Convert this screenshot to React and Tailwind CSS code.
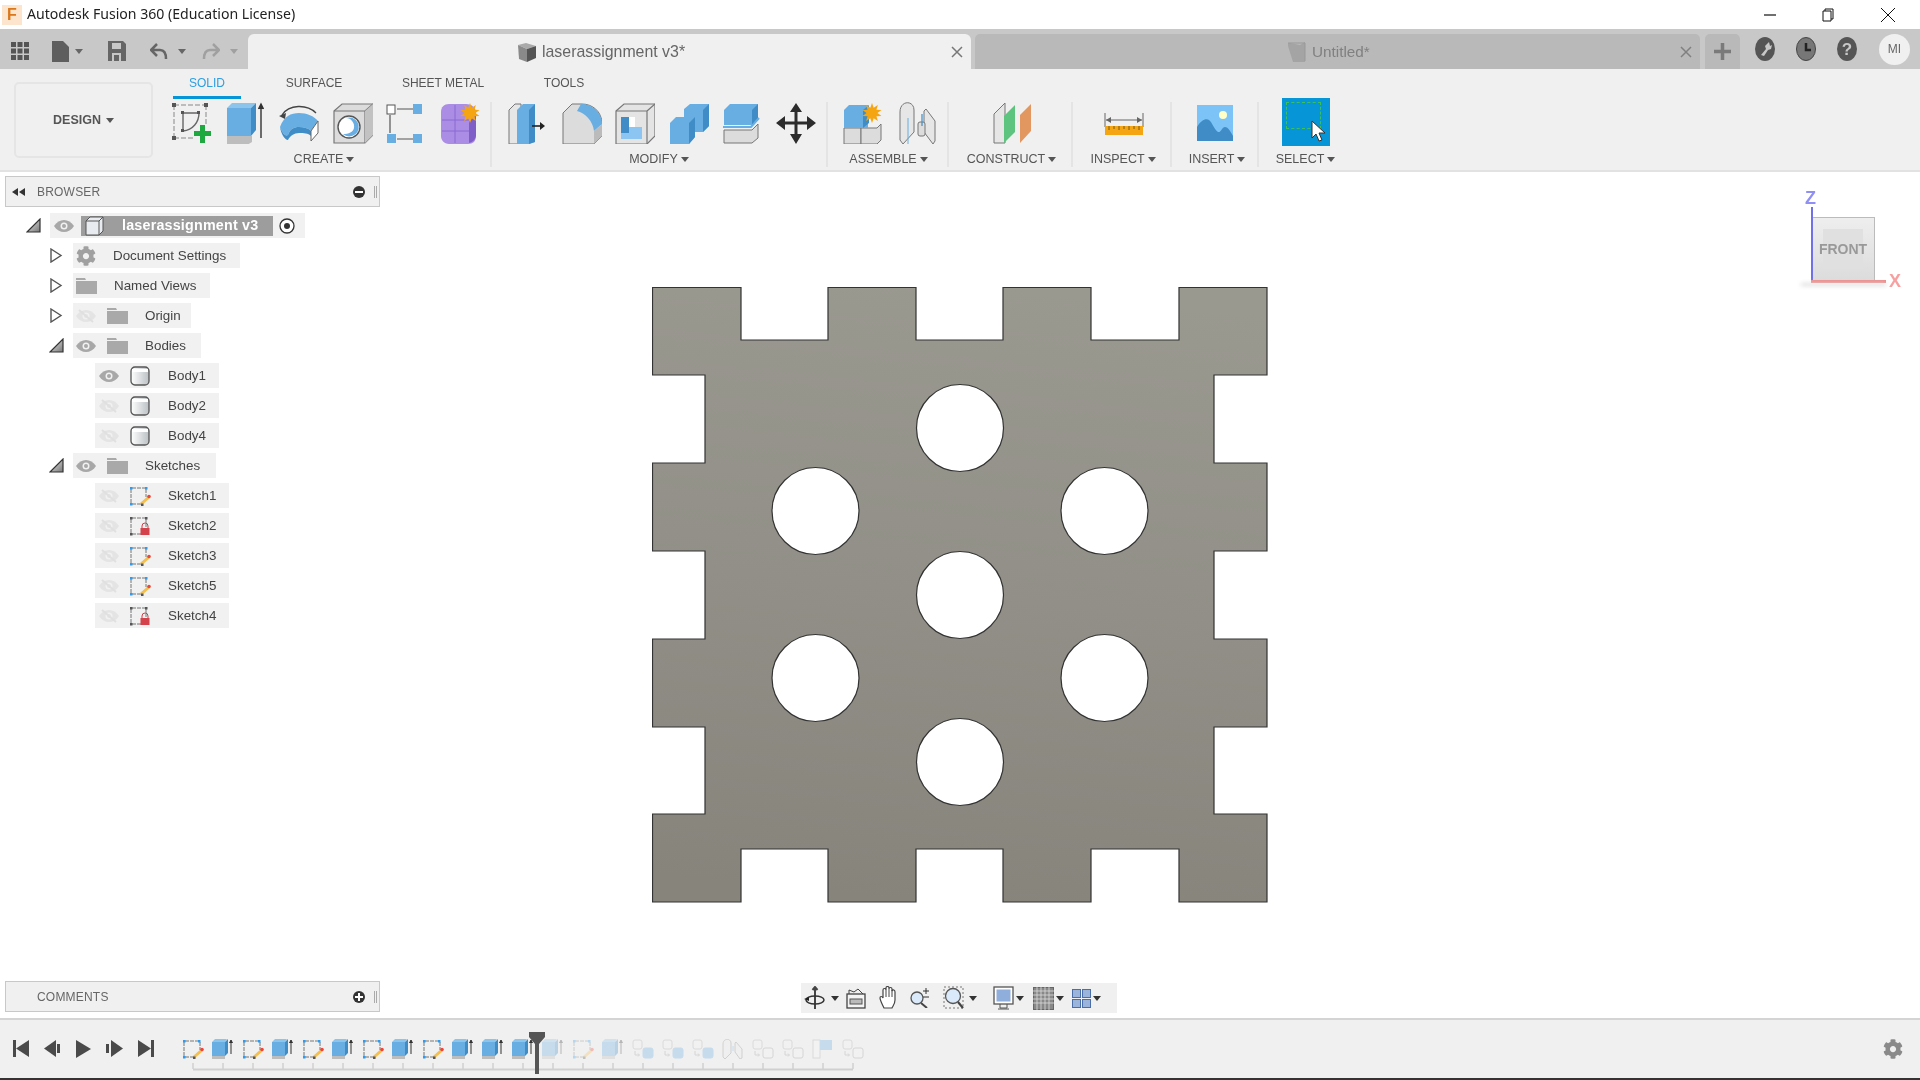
import { FaCog } from 'react-icons/fa'

const Ico = ({ w = 40, h = 42, children, className = '' }) => (
  <svg width={w} height={h} viewBox={`0 0 ${w} ${h}`} className={`shrink-0 ${className}`}>{children}</svg>
)

const BLUE = '#68aee2'
const DBLUE = '#3f8cc6'
const GR = '#dcdcdc'
const LN = '#777'

const Caret = ({ color = '#555' }) => (
  <svg width="8" height="5" viewBox="0 0 8 5" className="shrink-0"><path d="M0 0h8L4 5z" fill={color} /></svg>
)

const Star = ({ x, y, r = 9 }) => {
  const pts = []
  for (let i = 0; i < 20; i++) {
    const a = (i * Math.PI) / 10
    const rr = i % 2 ? r * 0.55 : r
    pts.push(`${x + rr * Math.sin(a)},${y - rr * Math.cos(a)}`)
  }
  return <polygon points={pts.join(' ')} fill="#f5a511" />
}

// toolbar icons
const SketchIcon = () => (
  <Ico>
    <path d="M2 3h32M2 3v33M2 36h20M34 3v20" stroke="#888" strokeWidth="1" strokeDasharray="5 2" fill="none" />
    {[[2, 3], [34, 3], [2, 36]].map(([x, y]) => <rect key={x + '' + y} x={x - 2} y={y - 2} width="4" height="4" fill="#555" />)}
    <path d="M11 11h16M11 11v17M27 11c0 9-6 17-16 18" stroke="#666" strokeWidth="1.4" fill="none" />
    <rect x="9" y="9" width="3" height="3" fill="#555" /><rect x="25" y="9" width="3" height="3" fill="#555" /><rect x="9" y="27" width="3" height="3" fill="#555" />
    <path d="M28 23h5v6h6v5h-6v7h-5v-7h-6v-5h6z" fill="#1fa83f" />
  </Ico>
)
const ExtrudeIcon = () => (
  <Ico>
    <path d="M1 34h25v6l-5 3H1z" fill="#bdbdbd" />
    <path d="M1 6h24v28H1z" fill={BLUE} />
    <path d="M1 6l5-5h24l-5 5z" fill="#8cc4ec" />
    <path d="M25 6l5-5v27l-5 6z" fill={DBLUE} />
    <path d="M35 36V3M32.5 7L35 2l2.5 5" stroke="#333" strokeWidth="1.4" fill="#333" />
  </Ico>
)
const RevolveIcon = () => (
  <Ico>
    <path d="M3 13C10 2 28 2 37 11" stroke="#444" strokeWidth="1.3" fill="none" />
    <path d="M0 14l7-3-1 6z" fill="#444" />
    <path d="M1 25C5 14 12 11 20 11s15 3 19 8l-7 10c-3-3-7-4-12-4s-9 2-11 8c-3 2-6-3-8-8z" fill={BLUE} />
    <path d="M1 25c2 5 5 10 8 8 2-6 6-8 11-8s9 1 12 4v5c-3-3-7-3-12-3s-9 3-11 7C6 38 2 32 1 25z" fill={DBLUE} />
    <path d="M32 29l7-10v12l-7 8z" fill="#fff" stroke="#666" />
  </Ico>
)
const HoleIcon = () => (
  <Ico>
    <path d="M1 9L9 2h31v31l-8 8H1z" fill={GR} stroke={LN} strokeWidth="1.2" />
    <path d="M1 9h31v32M32 9l8-7" stroke={LN} strokeWidth="1.2" fill="none" />
    <path d="M32 9l8-7v31l-8 8z" fill="#c2c2c2" />
    <circle cx="16" cy="25" r="11" fill="#fff" stroke="#555" strokeWidth="1.4" />
    <path d="M13 16a9.500 9.500 0 1 1-3 16c6 0 10-2 11-6 1-5-3-10-8-10z" fill={BLUE} />
  </Ico>
)
const PatternIcon = () => (
  <Ico>
    <path d="M11 7h16M4 13v18M11 37h16" stroke="#555" strokeWidth="1.2" />
    <rect x="1" y="3" width="8" height="9" fill="#fff" stroke="#555" />
    <rect x="27" y="2" width="9" height="10" fill={BLUE} />
    <rect x="1" y="32" width="9" height="9" fill={BLUE} />
    <rect x="27" y="32" width="9" height="9" fill={BLUE} />
  </Ico>
)
const FormIcon = () => (
  <Ico>
    <path d="M9 2h17c6 0 10 4 10 9v23c0 5-3 8-8 8H9c-5 0-8-4-8-8V10c0-5 3-8 8-8z" fill="#ab8de6" />
    <path d="M2 18h27M2 29h27M15 3v38" stroke="#8a6ad2" strokeWidth="1" />
    <path d="M29 19l7-6v20c0 4-3 7-7 8z" fill="#7f5fc7" />
    <Star x={30} y={11} r={10} />
  </Ico>
)
const PressPullIcon = () => (
  <Ico>
    <path d="M1 8l6-6h6v40H1z" fill="#e6e6e6" stroke={LN} />
    <path d="M9 8l6-6h12v38l-6 2H9z" fill={BLUE} />
    <path d="M21 8l6-6v38l-6 2z" fill={DBLUE} />
    <path d="M24 24h11" stroke="#222" strokeWidth="1.6" /><path d="M32 20l5 4-5 4z" fill="#222" />
  </Ico>
)
const FilletIcon = () => (
  <Ico>
    <path d="M1 11L10 2h10c10 0 20 7 20 20v12l-8 8H1z" fill={GR} stroke={LN} />
    <path d="M19 2c11 0 21 8 21 20l-8 7C31 19 23 11 15 9z" fill={BLUE} />
    <path d="M32 29l8-7v12l-8 8z" fill="#bbb" />
  </Ico>
)
const ShellIcon = () => (
  <Ico>
    <path d="M1 9l8-7h31v32l-8 8H1z" fill="#e4e4e4" stroke={LN} strokeWidth="1.2" />
    <path d="M1 9h31v33M32 9l8-7" stroke={LN} strokeWidth="1.2" fill="none" />
    <path d="M6 15h14v10h7v12H6z" fill="#8cc4f2" />
    <path d="M6 15h8v16H6z" fill={DBLUE} /><path d="M14 15h6v10h-6z" fill="#fff" />
    <path d="M6 37l8-6h13v6z" fill="#8cc4f2" />
  </Ico>
)
const CombineIcon = () => (
  <Ico>
    <path d="M15 7l6-5h19v22l-6 6H22v-15H15z" fill={BLUE} />
    <path d="M34 8l6-6v22l-6 6z" fill={DBLUE} />
    <path d="M1 21l6-6h19v20l-6 7H1z" fill={BLUE} />
    <path d="M20 21l6-6v20l-6 7z" fill={DBLUE} />
  </Ico>
)
const SplitIcon = () => (
  <Ico>
    <path d="M2 8l6-6h28v16l-6 5H2z" fill={BLUE} />
    <path d="M30 8l6-6v16l-6 5z" fill={DBLUE} />
    <path d="M1 25h28l8-9" stroke="#68aee2" strokeWidth="2" fill="none" />
    <path d="M2 28h28l6-6v14l-6 5H2z" fill={GR} stroke={LN} />
  </Ico>
)
const MoveIcon = () => (
  <Ico>
    <path d="M20 1l6 9h-4.500v9.500H31V14l9 7-9 7v-5.500h-9.500V32H26l-6 10-6-10h4.500v-9.500H9V28L0 21l9-7v5.500h9.500V10H14z" fill="#2c2c2c" />
  </Ico>
)
const NewCompIcon = () => (
  <Ico>
    <path d="M1 26h17v16H1z" fill={GR} stroke={LN} /><path d="M18 26h16l4-4v16l-4 4H18z" fill={GR} stroke={LN} />
    <path d="M1 8l5-5h19v23H1z" fill={BLUE} /><path d="M20 8l6-5v18l-6 5z" fill={DBLUE} />
    <Star x={29} y={11} r={10} />
  </Ico>
)
const JointIcon = () => (
  <Ico>
    <path d="M1 10c0-12 14-12 14-2v22L4 42 1 38z" fill="#e6e6e6" stroke={LN} />
    <path d="M9 16v26" stroke={BLUE} strokeWidth="1" />
    <path d="M27 7l9 12v20l-2 3-9-12V9z" fill="#e6e6e6" stroke={LN} />
    <rect x="19" y="20" width="7" height="14" rx="2" fill="#ddd" stroke={LN} />
    <path d="M23 12v12" stroke={DBLUE} strokeWidth="1.2" />
  </Ico>
)
const PlaneIcon = () => (
  <Ico>
    <path d="M1 12L12 1v40H1z" fill="#e6e6e6" stroke={LN} />
    <path d="M11 41V14L22 3v27z" fill="#5cc47e" />
    <path d="M27 41V13L38 2v27z" fill="#e29660" />
  </Ico>
)
const MeasureIcon = () => (
  <Ico>
    <path d="M1 11v14M39 11v14" stroke="#666" /><path d="M2 18h36" stroke="#666" />
    <path d="M2 18l5-3v6zM38 18l-5-3v6z" fill="#666" />
    <rect x="1" y="24" width="38" height="9" fill="#f5a511" />
    <path d="M5 24v4M10 24v3M15 24v4M20 24v3M25 24v4M30 24v3M35 24v4" stroke="#7a5a10" />
  </Ico>
)
const ImageIcon = () => (
  <Ico w={36} h={36}>
    <rect width="36" height="36" fill="#7cc3f8" />
    <circle cx="26" cy="10" r="4" fill="#ffffc8" />
    <path d="M0 36V22c4-7 9-9 12-7 3 2 5 9 9 12 3 1 4-5 7-5s6 5 8 9v5z" fill="#3f8cc6" />
  </Ico>
)
const SelectIcon = () => (
  <div className="w-[48px] h-[48px] bg-[#0696d7] relative shrink-0 mt-[-3px]">
    <div className="absolute left-[4px] top-[4px] w-[35px] h-[27px] border border-dashed border-[#3cc05c]" />
    <svg width="16" height="24" viewBox="0 0 16 24" className="absolute left-[29px] top-[22px]">
      <path d="M1 1v17l4-4 3 7 3-1-3-7h6z" fill="#fff" stroke="#333" strokeWidth="1" />
    </svg>
  </div>
)

// tree icons
const Eye = ({ off }) => (
  <svg width="20" height="14" viewBox="0 0 20 14" className="shrink-0">
    <path d="M0 7c5-8 15-8 20 0-5 8-15 8-20 0z" fill={off ? '#e4e4e4' : '#a8a8a8'} />
    <circle cx="10" cy="7" r="3.500" fill="#f1f1f1" />
    <circle cx="10" cy="7" r="2" fill={off ? '#e4e4e4' : '#a8a8a8'} />
    {off && <path d="M3 1l14 12" stroke="#e0e0e0" strokeWidth="2" />}
  </svg>
)
const Folder = () => (
  <svg width="21" height="16" viewBox="0 0 21 16" className="shrink-0">
    <path d="M0 0h9l1 2H0zM0 3h21v13H0z" fill="#a9a9a9" />
  </svg>
)
const Tri = ({ open }) => open ? (
  <svg width="15" height="15" viewBox="0 0 15 15" className="shrink-0">
    <defs><linearGradient id="trig" x1="0" y1="0" x2="1" y2="1"><stop offset="0" stopColor="#eee" /><stop offset="1" stopColor="#777" /></linearGradient></defs>
    <path d="M1 14L14 1v13z" fill="url(#trig)" stroke="#333" strokeWidth="1.2" />
  </svg>
) : (
  <svg width="15" height="15" viewBox="0 0 15 15" className="shrink-0">
    <path d="M2 1l10 6.500L2 14z" fill="#fff" stroke="#555" strokeWidth="1.4" />
  </svg>
)
const BodyIcon = () => (
  <svg width="20" height="20" viewBox="0 0 20 20" className="shrink-0">
    <defs><linearGradient id="bodyg" x1="0" y1="0" x2="1" y2="0"><stop offset="0" stopColor="#fff" /><stop offset="1" stopColor="#bcc0c4" /></linearGradient></defs>
    <rect x="1" y="1" width="18" height="18" rx="4" fill="url(#bodyg)" stroke="#555" strokeWidth="1.3" />
    <path d="M2 3h16v3H2z" fill="#fff" />
  </svg>
)
const TreeSketch = ({ lock }) => {
  const c = lock ? '#555' : '#2d9cf0'
  return (
    <svg width="22" height="20" viewBox="0 0 22 20" className="shrink-0">
      <path d="M3 2h14M2 3v15M3 18h10M17 3v8" stroke="#777" strokeWidth="1" fill="none" strokeDasharray="4 1" />
      {[[1, 1], [16, 1], [1, 17]].map(([x, y]) => <rect key={x * 10 + y} x={x} y={y} width="2.500" height="2.500" fill={c} />)}
      {lock ? (
        <>
          <path d="M13 12v-2a3 3 0 0 1 6 0v2" stroke="#c9404a" fill="none" />
          <rect x="11.500" y="12" width="9" height="7" fill="#d4424c" />
        </>
      ) : (
        <>
          <path d="M11 17l8-7 2 2-8 7z" fill="#f5bf4f" />
          <circle cx="20" cy="10.500" r="1.800" fill="#f0453a" />
          <rect x="12" y="17.500" width="2.500" height="2.500" fill="#555" />
        </>
      )}
    </svg>
  )
}

// timeline icons
const TlSketch = () => (
  <svg width="22" height="20" viewBox="0 0 22 20" className="shrink-0">
    <path d="M3 2h14M2 3v15M3 18h9M18 3v8" stroke="#777" strokeWidth="1" fill="none" strokeDasharray="4 1" />
    {[[1, 1], [16, 1], [1, 17]].map(([x, y]) => <rect key={x * 10 + y} x={x} y={y} width="2.500" height="2.500" fill="#2d9cf0" />)}
    <path d="M11 17l8-7 2 2-8 7z" fill="#f5bf4f" />
    <circle cx="20" cy="10.500" r="1.800" fill="#f0453a" />
    <rect x="11" y="17.500" width="2.500" height="2.500" fill="#555" />
  </svg>
)
const TlExtrude = () => (
  <svg width="22" height="20" viewBox="0 0 22 20" className="shrink-0">
    <path d="M0 16h13v4H0z" fill="#bdbdbd" />
    <path d="M0 3h13v14H0z" fill={BLUE} />
    <path d="M0 3l3-3h12l-2 3z" fill="#8cc4ec" />
    <path d="M13 3l3-3v14l-3 3z" fill={DBLUE} />
    <path d="M19 15V2M17.500 4L19 1l1.500 3" stroke="#333" strokeWidth="1" fill="#333" />
  </svg>
)
const TlLink = ({ blue }) => (
  <svg width="22" height="20" viewBox="0 0 22 20" className="shrink-0">
    <rect x="1" y="1" width="9" height="9" rx="2" fill="#f4f4f4" stroke="#aaa" />
    <path d="M3 12v4h4M6 14.500L7.500 16 6 17.500" stroke="#999" fill="none" />
    <rect x="11" y="9" width="10" height="10" rx="2" fill={blue ? BLUE : '#f4f4f4'} stroke={blue ? BLUE : '#999'} />
  </svg>
)
const TlJoint = () => (
  <svg width="22" height="20" viewBox="0 0 22 20" className="shrink-0">
    <path d="M1 5c0-6 8-6 8-1v10l-6 6-2-2zM14 3l6 7v9l-2 1-5-7V4z" fill="#eee" stroke="#888" />
    <path d="M11 7v5" stroke={BLUE} />
  </svg>
)
const TlFlag = () => (
  <svg width="22" height="20" viewBox="0 0 22 20" className="shrink-0">
    <rect x="1" y="1" width="7" height="18" fill="#f7f7f7" stroke="#aaa" />
    <rect x="8" y="1" width="12" height="10" fill={BLUE} />
  </svg>
)

const timeline = [
  ['s'], ['e'], ['s'], ['e'], ['s'], ['e'], ['s'], ['e'], ['s'], ['e'], ['e'], ['e'],
  ['e', 1], ['s', 1], ['e', 1], ['l', 1], ['l', 1], ['l', 1], ['j', 1], ['g', 1], ['g', 1], ['f', 1], ['g', 1],
]

const TlItem = ({ kind }) => {
  if (kind === 's') return <TlSketch />
  if (kind === 'e') return <TlExtrude />
  if (kind === 'l') return <TlLink blue />
  if (kind === 'g') return <TlLink />
  if (kind === 'j') return <TlJoint />
  return <TlFlag />
}

const Group = ({ width, label, children, gap, pl, pr = 0, ll = 0, last }) => (
  <div className={`flex flex-col shrink-0 ${last ? '' : 'border-r-2 border-[#e4e4e4]'}`} style={{ width }}>
    <div className="flex h-[42px] items-center" style={{ gap, paddingLeft: pl }}>{children}</div>
    <div className="flex items-center justify-center gap-[3px] mt-[8px] h-[15px] text-[12.500px] text-[#555] leading-none" style={{ paddingRight: pr, paddingLeft: ll }}>
      {label}<Caret />
    </div>
  </div>
)

const Row = ({ level, width, tri, children }) => (
  <div className="flex items-center h-[25px]">
    <div className={`flex items-center justify-start shrink-0 ${level === 0 ? 'w-[24px] ml-[26px]' : level === 1 ? 'w-[24px] ml-[49px]' : 'w-[95px]'}`}>
      {tri !== undefined && <Tri open={tri} />}
    </div>
    <div className="flex items-center h-[25px] bg-[#f1f1f1] text-[13.400px] text-[#444] leading-none" style={{ width }}>
      {children}
    </div>
  </div>
)

const bodies = ['Body1', 'Body2', 'Body4']
const sketches = [['Sketch1', false], ['Sketch2', true], ['Sketch3', false], ['Sketch5', false], ['Sketch4', true]]

const hole = (cx, cy, r = 43.5) => `M${cx - r} ${cy}a${r} ${r} 0 1 0 ${2 * r} 0a${r} ${r} 0 1 0 ${-2 * r} 0z`
const holes = [[960, 428], [815.5, 511], [1104.5, 511], [960, 595], [815.5, 678], [1104.5, 678], [960, 762]]
const outline = 'M652.500 287.500H741V340H828V287.500H916V340H1003V287.500H1091V340H1179V287.500H1267V375H1214V463H1267V551H1214V639H1267V727H1214V814H1267V902H1179V849H1091V902H1003V849H916V902H828V849H741V902H652.500V814H705V727H652.500V639H705V551H652.500V463H705V375H652.500Z'

export default function App() {
  return (
    <div className="w-[1920px] h-screen flex flex-col overflow-hidden bg-white blur-[0.4px] font-['Liberation_Sans',Arial,sans-serif]">
      {/* title bar */}
      <div className="h-[29px] flex items-center shrink-0">
        <div className="w-[20px] h-[20px] ml-[2px] bg-[#fde4cc] flex items-center justify-center text-[#d9771c] font-bold text-[16px] leading-none">F</div>
        <span className="ml-[5px] text-[14.100px] text-[#222] font-['Noto_Sans',sans-serif] leading-none">Autodesk Fusion 360 (Education License)</span>
        <div className="ml-auto flex items-center">
          <svg width="12" height="2" viewBox="0 0 12 2" className="mr-[46px]"><path d="M0 1h12" stroke="#111" strokeWidth="1.2" /></svg>
          <svg width="13" height="14" viewBox="0 0 13 14" className="mr-[46px]"><path d="M3 3V1h8v10H9M1 3h8v10H1z" fill="none" stroke="#111" /></svg>
          <svg width="14" height="14" viewBox="0 0 14 14" className="mr-[25px]"><path d="M0 0l14 14M14 0L0 14" stroke="#111" /></svg>
        </div>
      </div>

      {/* tabs */}
      <div className="h-[40px] shrink-0 bg-[#c8c8c8] flex pt-[5px]">
        <div className="w-[248px] shrink-0 flex items-center pl-[11px] pb-[1px]">
          <svg width="18" height="18" viewBox="0 0 18 18" className="shrink-0">
            {[0, 6.500, 13].map((x) => [0, 6.500, 13].map((y) => <rect key={`${x}-${y}`} x={x} y={y} width="5" height="5" fill="#555" />))}
          </svg>
          <svg width="17" height="21" viewBox="0 0 17 21" className="ml-[23px] shrink-0"><path d="M0 0h11l6 6v15H0z" fill="#5e5e5e" /></svg>
          <span className="ml-[6px]"><Caret color="#666" /></span>
          <svg width="18" height="20" viewBox="0 0 18 20" className="ml-[25px] shrink-0"><path d="M0 0h15l3 3v17H0z" fill="#666" /><rect x="4" y="2" width="9" height="6" fill="#c8c8c8" /><rect x="4" y="12" width="9" height="8" fill="#c8c8c8" /><rect x="6" y="14" width="5" height="6" fill="#666" /></svg>
          <svg width="18" height="18" viewBox="0 0 18 18" className="ml-[24px] shrink-0"><path d="M7 2L1 8l6 6M1 8h9c4 0 6 3 6 9" fill="none" stroke="#666" strokeWidth="2.500" /></svg>
          <span className="ml-[10px]"><Caret color="#666" /></span>
          <svg width="18" height="18" viewBox="0 0 18 18" className="ml-[16px] shrink-0"><path d="M11 2l6 6-6 6M17 8H8c-4 0-6 3-6 9" fill="none" stroke="#a0a0a0" strokeWidth="2.500" /></svg>
          <span className="ml-[10px]"><Caret color="#a0a0a0" /></span>
        </div>
        <div className="w-[723px] shrink-0 bg-[#f0f0f0] rounded-t-[6px] flex items-center pl-[269px] pr-[8px]">
          <svg width="20" height="20" viewBox="0 0 20 20" className="shrink-0"><path d="M1 3l8-2 10 3-9 3z" fill="#aaa" /><path d="M1 3l9 4v13l-8-3z" fill="#8a8a8a" /><path d="M10 7l9-3v12l-9 4z" fill="#555" /></svg>
          <span className="ml-[5px] text-[15.900px] text-[#666] leading-none">laserassignment v3*</span>
          <svg width="12" height="12" viewBox="0 0 12 12" className="ml-auto"><path d="M1 1l10 10M11 1L1 11" stroke="#777" strokeWidth="1.500" /></svg>
        </div>
        <div className="w-[725px] ml-[4px] shrink-0 bg-[#b9b9b9] rounded-t-[5px] flex items-center pl-[313px] pr-[8px]">
          <svg width="18" height="20" viewBox="0 0 18 20" className="shrink-0"><path d="M0 1h2l10 2 5-3v20H5L0 4z" fill="#a4a4a4" /><path d="M0 1h17v18" fill="none" stroke="#999" /></svg>
          <span className="ml-[6px] text-[15.300px] text-[#808080] leading-none">Untitled*</span>
          <svg width="12" height="12" viewBox="0 0 12 12" className="ml-auto"><path d="M1 1l10 10M11 1L1 11" stroke="#808080" strokeWidth="1.500" /></svg>
        </div>
        <div className="w-[35px] ml-[5px] shrink-0 bg-[#b9b9b9] rounded-t-[5px] flex items-center justify-center">
          <svg width="17" height="17" viewBox="0 0 17 17"><path d="M8.500 0v17M0 8.500h17" stroke="#7a7a7a" strokeWidth="3.500" /></svg>
        </div>
        <div className="flex-1 flex items-center pb-[5px]">
          <svg width="20" height="24" viewBox="0 0 20 24" className="ml-[15px] shrink-0"><ellipse cx="10" cy="12" rx="10" ry="12" fill="#555" /><path d="M14 5l-4 4 1 3-5 6 3 1 4-6 3-1 1-4-2 1z" fill="#c8c8c8" /></svg>
          <svg width="20" height="24" viewBox="0 0 20 24" className="ml-[21px] shrink-0"><ellipse cx="10" cy="12" rx="9.500" ry="11.500" fill="#777" stroke="#444" /><path d="M10 6v7h5" stroke="#222" strokeWidth="2.500" fill="none" /></svg>
          <svg width="20" height="24" viewBox="0 0 20 24" className="ml-[21px] shrink-0"><ellipse cx="10" cy="12" rx="10" ry="12" fill="#555" /><text x="10" y="18" textAnchor="middle" fontSize="17" fontWeight="700" fill="#c8c8c8">?</text></svg>
          <div className="w-[31px] h-[31px] ml-[22px] rounded-full bg-[#f0f0f0] flex items-center justify-center text-[12px] text-[#666] leading-none">MI</div>
        </div>
      </div>

      {/* toolbar */}
      <div className="h-[103px] shrink-0 bg-[#f0f0f0] border-b-2 border-[#e2e2e2] flex">
        <div className="w-[167px] shrink-0 pl-[14px] pt-[13px]">
          <div className="w-[139px] h-[76px] border-2 border-[#e5e5e5] rounded-[5px] flex items-center justify-center gap-[5px] text-[12.500px] font-bold text-[#555]">
            DESIGN<Caret />
          </div>
        </div>
        <div className="flex flex-col">
          <div className="h-[33px] flex text-[12px] text-[#555] leading-none">
            <div className="w-[68px] ml-[6px] h-[30px] pt-[8px] text-center text-[#2d9fe0] border-b-[3px] border-[#0696d7]">SOLID</div>
            <div className="w-[74px] ml-[36px] pt-[8px] text-center">SURFACE</div>
            <div className="w-[100px] ml-[42px] pt-[8px] text-center">SHEET METAL</div>
            <div className="w-[60px] ml-[41px] pt-[8px] text-center">TOOLS</div>
          </div>
          <div className="flex">
            <Group width={325} label="CREATE" gap="13.500px" pl="5px" pr="9px">
              <SketchIcon /><ExtrudeIcon /><RevolveIcon /><HoleIcon /><PatternIcon /><FormIcon />
            </Group>
            <Group width={336} label="MODIFY" gap="13.500px" pl="16px">
              <PressPullIcon /><FilletIcon /><ShellIcon /><CombineIcon /><SplitIcon /><MoveIcon />
            </Group>
            <Group width={121} label="ASSEMBLE" gap="16px" pl="15px" ll="2px">
              <NewCompIcon /><JointIcon />
            </Group>
            <Group width={124} label="CONSTRUCT" pl="44px" ll="3px">
              <PlaneIcon />
            </Group>
            <Group width={99} label="INSPECT" pl="31px" ll="3px">
              <MeasureIcon />
            </Group>
            <Group width={87} label="INSERT" pl="25px" ll="5px">
              <ImageIcon />
            </Group>
            <Group width={90} label="SELECT" pl="23px" ll="3px" last>
              <SelectIcon />
            </Group>
          </div>
        </div>
      </div>

      {/* canvas */}
      <div className="flex-1 relative min-h-0 pl-[652px] pt-[115px]">
        <svg width="616" height="616" viewBox="652 287 616 616">
          <defs>
            <linearGradient id="plate" x1="0.55" y1="0" x2="0.45" y2="1">
              <stop offset="0" stopColor="#9a9990" />
              <stop offset="0.5" stopColor="#918f87" />
              <stop offset="1" stopColor="#86847b" />
            </linearGradient>
          </defs>
          <path d={outline + holes.map(([x, y]) => hole(x, y)).join('')} fill="url(#plate)" fillRule="evenodd" stroke="#333" strokeWidth="1.200" />
        </svg>

        {/* browser */}
        <div className="absolute left-[5px] top-[4px] w-[375px]">
          <div className="h-[31px] bg-[#f0f0f0] border border-[#c8c8c8] flex items-center text-[12px] text-[#666] leading-none">
            <svg width="13" height="8" viewBox="0 0 13 8" className="ml-[6px]"><path d="M6 0v8L0 4zM13 0v8L7 4z" fill="#333" /></svg>
            <span className="ml-[12px] tracking-[0.2px]">BROWSER</span>
            <div className="ml-auto mr-[9px] w-[12px] h-[12px] rounded-full bg-[#333] flex items-center justify-center"><div className="w-[8px] h-[2px] bg-white" /></div>
            <div className="w-[3px] h-[12px] border-x border-[#aaa] mr-[2px]" />
          </div>
          <div className="flex flex-col gap-[5px] mt-[6px] ml-[-5px]">
            <Row level={0} tri={true} width={255}>
              <span className="ml-[4px]"><Eye /></span>
              <div className="ml-[7px] w-[192px] h-[20px] bg-[#9d9d9d] flex items-center">
                <svg width="20" height="20" viewBox="0 0 20 20" className="ml-[4px] shrink-0"><path d="M1 5l4-4h13v14l-4 4H1z" fill="#e8ecf0" stroke="#555" /><path d="M1 5h13v14M14 5l4-4" stroke="#555" fill="none" /></svg>
                <span className="ml-[17px] text-white font-bold text-[14.300px] tracking-[0.2px]">laserassignment v3</span>
              </div>
              <svg width="16" height="16" viewBox="0 0 16 16" className="ml-[6px]"><circle cx="8" cy="8" r="7" fill="#fff" stroke="#333" strokeWidth="1.300" /><circle cx="8" cy="8" r="3" fill="#333" /></svg>
            </Row>
            <Row level={1} tri={false} width={167}>
              <FaCog size={20} color="#a0a0a0" className="ml-[3px] shrink-0" />
              <span className="ml-[17px]">Document Settings</span>
            </Row>
            <Row level={1} tri={false} width={137}>
              <span className="ml-[3px]"><Folder /></span>
              <span className="ml-[17px]">Named Views</span>
            </Row>
            <Row level={1} tri={false} width={118}>
              <span className="ml-[3px]"><Eye off /></span>
              <span className="ml-[11px]"><Folder /></span>
              <span className="ml-[17px]">Origin</span>
            </Row>
            <Row level={1} tri={true} width={128}>
              <span className="ml-[3px]"><Eye /></span>
              <span className="ml-[11px]"><Folder /></span>
              <span className="ml-[17px]">Bodies</span>
            </Row>
            {bodies.map((b, i) => (
              <Row key={b} level={2} width={124}>
                <span className="ml-[4px]"><Eye off={i > 0} /></span>
                <span className="ml-[11px]"><BodyIcon /></span>
                <span className="ml-[18px]">{b}</span>
              </Row>
            ))}
            <Row level={1} tri={true} width={143}>
              <span className="ml-[3px]"><Eye /></span>
              <span className="ml-[11px]"><Folder /></span>
              <span className="ml-[17px]">Sketches</span>
            </Row>
            {sketches.map(([s, lock]) => (
              <Row key={s} level={2} width={134}>
                <span className="ml-[4px]"><Eye off /></span>
                <span className="ml-[10px]"><TreeSketch lock={lock} /></span>
                <span className="ml-[17px]">{s}</span>
              </Row>
            ))}
          </div>
        </div>

        {/* comments */}
        <div className="absolute left-[5px] top-[809px] w-[375px] h-[31px] bg-[#f0f0f0] border border-[#c8c8c8] flex items-center text-[12px] text-[#666] leading-none">
          <span className="ml-[31px] tracking-[0.2px]">COMMENTS</span>
          <div className="ml-auto mr-[9px] w-[12px] h-[12px] rounded-full bg-[#333] relative">
            <div className="absolute left-[2px] top-[5px] w-[8px] h-[2px] bg-white" />
            <div className="absolute left-[5px] top-[2px] w-[2px] h-[8px] bg-white" />
          </div>
          <div className="w-[3px] h-[12px] border-x border-[#aaa] mr-[2px]" />
        </div>

        {/* view cube */}
        <div className="absolute left-[1795px] top-[20px] w-[115px] h-[100px]">
          <span className="absolute left-[10px] top-[-3px] text-[18px] font-bold text-[#8f8ff5] leading-none">Z</span>
          <span className="absolute left-[94px] top-[80px] text-[18px] font-bold text-[#f8a0a0] leading-none">X</span>
          <div className="absolute left-[16px] top-[25px] w-[64px] h-[64px] bg-gradient-to-b from-[#eeeeee] to-[#dcdcdc] border border-[#bbb] flex items-center justify-center">
            <div className="w-[40px] h-[40px] bg-[#e0e0e0] flex items-center justify-center text-[14px] font-bold text-[#999] leading-none">FRONT</div>
          </div>
          <div className="absolute left-[16px] top-[15px] w-[2px] h-[75px] bg-[#7070e8]" />
          <div className="absolute left-[16px] top-[88px] w-[75px] h-[3px] bg-[#ee8888]" />
          <div className="absolute left-[6px] top-[91px] w-[85px] h-[3px] bg-[#dddddd] blur-[2px]" />
        </div>

        {/* nav bar */}
        <div className="absolute left-[801px] top-[811px] w-[316px] h-[30px] bg-[#f0f0f0] flex items-center pl-[3px]">
          <svg width="22" height="24" viewBox="0 0 22 24" className="shrink-0"><path d="M11 1v22M8.500 4L11 1l2.500 3" stroke="#444" strokeWidth="2" fill="none" /><ellipse cx="11" cy="14" rx="9" ry="4" fill="none" stroke="#333" strokeWidth="1.500" /><path d="M0 13l5-2v4z" fill="#222" /></svg>
          <span className="ml-[5px]"><Caret color="#333" /></span>
          <svg width="20" height="22" viewBox="0 0 20 22" className="ml-[7px] shrink-0"><rect x="1" y="7" width="18" height="14" fill="#f4f4f4" stroke="#444" strokeWidth="1.300" /><rect x="4" y="12" width="12" height="5" fill="#bbb" stroke="#555" /><path d="M3 7V3l5 2 4-3 5 5" stroke="#444" fill="none" /></svg>
          <svg width="22" height="24" viewBox="0 0 22 24" className="ml-[13px] shrink-0"><path d="M5 22C3 18 1 14 1 12c0-2 2-2 3 0V4c0-2 3-2 3 0V2c0-2 3-2 3 0v1c0-2 3-2 3 0v2c1-2 3-1 3 1v8c0 4-2 6-3 8z" fill="#fff" stroke="#444" strokeWidth="1.200" /><path d="M7 4v7M10 3v8M13 4v7" stroke="#444" /></svg>
          <svg width="21" height="20" viewBox="0 0 21 20" className="ml-[8px] shrink-0"><circle cx="8" cy="10" r="6" fill="#dbeafa" stroke="#555" strokeWidth="1.300" /><path d="M12 15l6 5" stroke="#444" strokeWidth="2" /><path d="M14 3h6M17 0v6M14 9h6" stroke="#333" /></svg>
          <svg width="21" height="24" viewBox="0 0 21 24" className="ml-[13px] shrink-0"><rect x="1" y="1" width="19" height="21" fill="none" stroke="#777" strokeDasharray="2 2" /><circle cx="10" cy="10" r="7.500" fill="#dbeafa" stroke="#555" strokeWidth="1.300" /><path d="M15 16l5 6" stroke="#444" strokeWidth="2.200" /></svg>
          <span className="ml-[5px]"><Caret color="#333" /></span>
          <svg width="21" height="24" viewBox="0 0 21 24" className="ml-[16px] shrink-0"><rect x="1" y="1" width="19" height="17" fill="#fff" stroke="#555" strokeWidth="1.300" /><rect x="3.500" y="3.500" width="14" height="12" fill="#8faedb" /><path d="M7 18v4h7v-4M5 23h11" stroke="#555" fill="none" /></svg>
          <span className="ml-[2px]"><Caret color="#333" /></span>
          <svg width="21" height="23" viewBox="0 0 21 23" className="ml-[9px] shrink-0"><rect x="0.500" y="0.500" width="20" height="22" fill="#888" stroke="#666" /><path d="M4 0v23M8 0v23M12 0v23M16 0v23M0 4h21M0 8h21M0 12h21M0 16h21" stroke="#ddd" strokeWidth="0.800" /></svg>
          <span className="ml-[2px]"><Caret color="#333" /></span>
          <svg width="19" height="19" viewBox="0 0 19 19" className="ml-[8px] shrink-0"><rect x="0.500" y="0.500" width="8" height="8" fill="#9ab4dc" stroke="#4a6ea8" /><rect x="10.500" y="0.500" width="8" height="8" fill="#9ab4dc" stroke="#4a6ea8" /><rect x="0.500" y="10.500" width="8" height="8" fill="#9ab4dc" stroke="#4a6ea8" /><rect x="10.500" y="10.500" width="8" height="8" fill="#9ab4dc" stroke="#4a6ea8" /></svg>
          <span className="ml-[2px]"><Caret color="#333" /></span>
        </div>
      </div>

      {/* timeline */}
      <div className="h-[60px] shrink-0 bg-[#f0f0f0] border-t-2 border-[#d4d4d4] relative flex items-center pb-[1px]">
        <div className="flex items-center pl-[13px] w-[182px] shrink-0">
          <svg width="16" height="17" viewBox="0 0 16 17" className="shrink-0"><rect width="3" height="17" fill="#4a4a4a" /><path d="M16 0v17L3 8.500z" fill="#4a4a4a" /></svg>
          <svg width="17" height="17" viewBox="0 0 17 17" className="ml-[15px] shrink-0"><path d="M12 0v17L0 8.500z" fill="#4a4a4a" /><rect x="13" y="4" width="3" height="9" fill="#4a4a4a" /></svg>
          <svg width="15" height="18" viewBox="0 0 15 18" className="ml-[15px] shrink-0"><path d="M0 0v18l15-9z" fill="#4a4a4a" /></svg>
          <svg width="17" height="17" viewBox="0 0 17 17" className="ml-[15px] shrink-0"><rect x="0" y="4" width="3" height="9" fill="#4a4a4a" /><path d="M5 0v17l12-8.500z" fill="#4a4a4a" /></svg>
          <svg width="16" height="17" viewBox="0 0 16 17" className="ml-[15px] shrink-0"><path d="M0 0v17l13-8.500z" fill="#4a4a4a" /><rect x="13" width="3" height="17" fill="#4a4a4a" /></svg>
        </div>
        <div className="flex items-center">
          {timeline.map(([k, faded], i) => (
            <div key={i} className={`w-[30px] flex ${faded ? 'opacity-30' : ''}`}><TlItem kind={k} /></div>
          ))}
        </div>
        {/* ruler under the timeline items */}
        <svg width="670" height="10" viewBox="0 0 670 10" className="absolute left-[188px] top-[41px]">
          <path d="M5 8.500H665" stroke="#d0d0d0" strokeWidth="2" />
          {Array.from({ length: 23 }, (_, i) => <path key={i} d={`M${5 + i * 30} 2V8`} stroke="#d0d0d0" strokeWidth="1.500" />)}
        </svg>
        <svg width="16" height="42" viewBox="0 0 16 42" className="absolute left-[529px] top-[12px]">
          <path d="M0 0h16v5l-6 7v30H6V12L0 5z" fill="#555" />
        </svg>
        <FaCog size={20} color="#8a8a8a" className="ml-auto mr-[17px] shrink-0" />
      </div>
      <div className="h-[2px] bg-[#333] shrink-0" />
    </div>
  )
}
